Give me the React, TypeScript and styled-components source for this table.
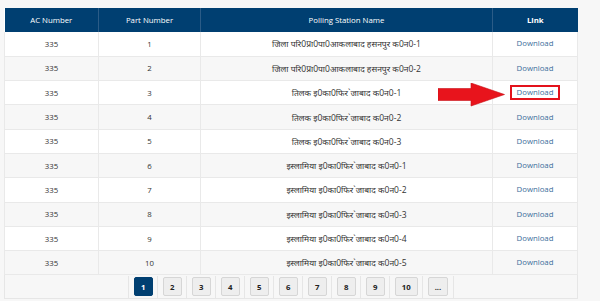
import { createGlobalStyle, styled } from 'styled-components';

const GlobalStyle = createGlobalStyle`
  html, body {
    margin: 0;
    padding: 0;
    background: #f7f7f7;
  }

  body {
    font-family: 'Open Sans', 'Noto Sans', 'Noto Sans Devanagari', sans-serif;
  }
`;

const Page = styled.main`
  position: relative;
  width: 600px;
  height: 301px;
  padding: 8px 0 0 4px;
  box-sizing: border-box;
  overflow: hidden;
`;

const Table = styled.table`
  width: 573px;
  border-collapse: collapse;
  table-layout: fixed;
  background: #ffffff;

  font-size: 7.8px;
  color: #333333;
`;

const HeadCell = styled.th<{ $bold?: boolean }>`
  height: 24px;
  padding: 0;

  background: #003f71;
  border-left: 1px solid #2b5c87;
  color: #ffffff;

  font-weight: ${(props) => (props.$bold ? 700 : 400)};
  text-align: center;

  &:first-child {
    border-left: none;
  }
`;

const Row = styled.tr<{ $striped: boolean }>`
  height: 24.3px;
  background: ${(props) => (props.$striped ? '#f7f7f7' : '#ffffff')};
`;

const Cell = styled.td<{ $script?: boolean }>`
  padding: 0;

  border: 1px solid #e9e9e9;
  border-top: none;

  font-size: ${(props) => (props.$script ? '8.5px' : '7.8px')};
  text-align: center;
  white-space: nowrap;
`;

const DownloadLink = styled.a<{ $highlighted?: boolean }>`
  display: inline-block;
  padding: 0 ${(props) => (props.$highlighted ? '5px' : '0')};

  border: ${(props) => (props.$highlighted ? '2px solid #e3121b' : 'none')};
  color: #3c6e9b;
  line-height: 11px;
  text-decoration: none;
`;

const PagerRow = styled.tr`
  height: 24px;
  background: #f7f7f7;
`;

const PagerCell = styled.td`
  padding: 0;
  border: 1px solid #e6e6e6;
`;

const Pager = styled.div`
  display: flex;
  justify-content: center;
`;

const PagerItem = styled.div`
  display: flex;
  align-items: center;

  height: 22px;
  padding: 0 4.5px;

  border-left: 1px solid #e6e6e6;

  &:last-child {
    border-right: 1px solid #e6e6e6;
  }
`;

const PageButton = styled.span<{ $active?: boolean }>`
  display: flex;
  align-items: center;
  justify-content: center;

  min-width: 19px;
  height: 19px;
  padding: 0 6px;
  box-sizing: border-box;

  border: 1px solid ${(props) => (props.$active ? '#003f71' : '#d6d6d6')};
  border-radius: 2px;
  background: ${(props) => (props.$active ? '#003f71' : '#eeeeee')};
  color: ${(props) => (props.$active ? '#ffffff' : '#222222')};

  font-size: 7.8px;
  font-weight: 700;
`;

const Arrow = styled.svg`
  position: absolute;
  left: 438px;
  top: 83px;
`;

type Station = {
  part: number;
  name: string;
};

const stations: Station[] = [
  { part: 1, name: 'जिला परि0प्रा0पा0आकलाबाद हसनपुर क0न0-1' },
  { part: 2, name: 'जिला परि0प्रा0पा0आकलाबाद हसनपुर क0न0-2' },
  { part: 3, name: 'तिलक इ0का0फिर`जाबाद क0न0-1' },
  { part: 4, name: 'तिलक इ0का0फिर`जाबाद क0न0-2' },
  { part: 5, name: 'तिलक इ0का0फिर`जाबाद क0न0-3' },
  { part: 6, name: 'इस्लामिया इ0का0फिर`जाबाद क0न0-1' },
  { part: 7, name: 'इस्लामिया इ0का0फिर`जाबाद क0न0-2' },
  { part: 8, name: 'इस्लामिया इ0का0फिर`जाबाद क0न0-3' },
  { part: 9, name: 'इस्लामिया इ0का0फिर`जाबाद क0न0-4' },
  { part: 10, name: 'इस्लामिया इ0का0फिर`जाबाद क0न0-5' },
];

const pages = ['1', '2', '3', '4', '5', '6', '7', '8', '9', '10', '...'];

const App = () => {
  return (
    <>
      <GlobalStyle />
      <Page>
        <Table>
          <colgroup>
            <col style={{ width: 94 }} />
            <col style={{ width: 102 }} />
            <col style={{ width: 292 }} />
            <col style={{ width: 85 }} />
          </colgroup>
          <thead>
            <tr>
              <HeadCell>AC Number</HeadCell>
              <HeadCell>Part Number</HeadCell>
              <HeadCell>Polling Station Name</HeadCell>
              <HeadCell $bold>Link</HeadCell>
            </tr>
          </thead>
          <tbody>
            {stations.map((station, index) => (
              <Row key={station.part} $striped={index % 2 === 1}>
                <Cell>335</Cell>
                <Cell>{station.part}</Cell>
                <Cell $script>{station.name}</Cell>
                <Cell>
                  <DownloadLink href="#" $highlighted={station.part === 3}>
                    Download
                  </DownloadLink>
                </Cell>
              </Row>
            ))}
            <PagerRow>
              <PagerCell colSpan={4}>
                <Pager>
                  {pages.map((page) => (
                    <PagerItem key={page}>
                      <PageButton $active={page === '1'}>{page}</PageButton>
                    </PagerItem>
                  ))}
                </Pager>
              </PagerCell>
            </PagerRow>
          </tbody>
        </Table>

        <Arrow width="68" height="24" viewBox="0 0 68 24">
          <polygon
            points="0,5.5 33,5.5 33,0 66.5,11.5 33,23 33,17.5 0,17.5"
            fill="#e8141c"
            stroke="#c80f16"
            strokeWidth="0.6"
          />
        </Arrow>
      </Page>
    </>
  );
};

export default App;
